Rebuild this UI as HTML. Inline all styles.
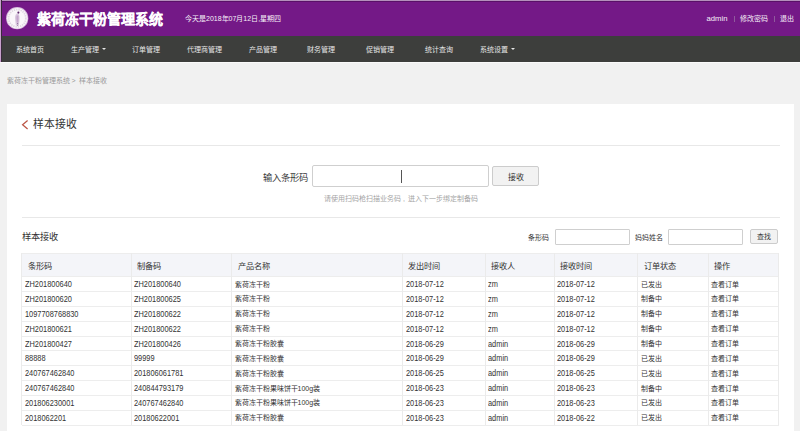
<!DOCTYPE html>
<html lang="zh-CN">
<head>
<meta charset="utf-8">
<style>
*{margin:0;padding:0;box-sizing:border-box;}
html,body{width:800px;height:431px;overflow:hidden;background:#f1f1f1;font-family:"Liberation Sans",sans-serif;color:#333;}
.abs{position:absolute;white-space:nowrap;}
#hdr{position:absolute;left:0;top:0;width:800px;height:36px;background:#741987;border-top:1px solid #b490bc;box-shadow:inset 0 1px 0 #5a1068;}
#lb{position:absolute;left:0;top:0;width:2px;height:62px;border-left:1px solid #c8a0cc;background:#3a2a3c;}
#navline{position:absolute;left:0;top:62px;width:800px;height:1px;background:#fafafa;}
#nav{position:absolute;left:0;top:36px;width:800px;height:26px;background:#3d3e3c;}
.nav{position:absolute;top:36.75px;height:26px;line-height:26px;font-size:7px;color:#e6e6e6;white-space:nowrap;}
.caret{display:inline-block;width:0;height:0;border-left:2px solid transparent;border-right:2px solid transparent;border-top:2.2px solid #e6e6e6;vertical-align:middle;margin-left:3px;margin-top:-1px;}
#panel{position:absolute;left:7px;top:104px;width:787px;height:327px;background:#fff;}
.hr{position:absolute;left:22px;width:758px;height:1px;background:#e8e8e8;}
.inp{position:absolute;border:1px solid #cfcfcf;border-radius:2px;background:#fff;}
.btn{position:absolute;border:1px solid #cccccc;border-radius:2px;background:#f2f2f2;font-size:8px;color:#333;text-align:center;}
.th{position:absolute;white-space:nowrap;font-size:8.2px;line-height:23.3px;padding-top:1.8px;color:#333;}
.td{position:absolute;white-space:nowrap;font-size:8.5px;line-height:14.85px;padding-top:0.6px;color:#333;transform:scaleX(0.87);transform-origin:0 50%;}
.td.cj,.td.pn{font-size:7px;padding-top:1px;transform:none;color:#333;}
</style>
</head>
<body>
<div id="hdr"></div>
<!-- logo -->
<svg class="abs" style="left:6px;top:6.5px" width="23" height="23" viewBox="0 0 23 23">
  <circle cx="11.2" cy="11.2" r="11.1" fill="#d8bede"/>
  <circle cx="11.2" cy="11.2" r="10.3" fill="#faf7fa"/>
  <circle cx="11.2" cy="11.2" r="8.6" fill="none" stroke="#e0d8e2" stroke-width="1.8" stroke-dasharray="1.4 0.9"/>
  <path d="M11.8 6.3 C10 6.8,8.9 8.6,9 10.8 C9.1 13,9.6 15.2,9.9 18.6 L12.9 18.6 C13.1 16,13.6 13.2,13.5 11 C13.5 9,13.2 7.3,11.8 6.3 Z" fill="#d9c8de"/>
  <path d="M10.6 8.5 C10.2 10.5,10.5 13,10.9 15.5 L12.2 15.5 C12.5 13,12.6 10.5,12.3 8.5 Z" fill="#c4a6cc"/>
  <circle cx="12.4" cy="5.6" r="1.05" fill="#5a2468"/>
  <circle cx="11.6" cy="16.6" r="0.6" fill="#8a6a96"/>
  <circle cx="11.6" cy="18.2" r="0.5" fill="#8a6a96"/>
</svg>
<div class="abs" style="left:37px;top:11px;font-size:14px;line-height:16px;font-weight:bold;color:#fff;-webkit-text-stroke:0.25px #fff;">紫荷冻干粉管理系统</div>
<div class="abs" style="left:185px;top:13.5px;font-size:7px;line-height:10px;color:#f6f0f8;">今天是2018年07月12日,星期四</div>
<div class="abs" style="left:706.5px;top:14px;font-size:7.7px;line-height:10px;color:#f6f0f8;">admin</div>
<div class="abs" style="left:733.5px;top:15.5px;width:1px;height:6px;background:#8f5a9c;"></div>
<div class="abs" style="left:740px;top:13.75px;font-size:7px;line-height:10px;color:#f6f0f8;">修改密码</div>
<div class="abs" style="left:774px;top:15.5px;width:1px;height:6px;background:#8f5a9c;"></div>
<div class="abs" style="left:780px;top:13.75px;font-size:7px;line-height:10px;color:#f6f0f8;">退出</div>

<div id="nav"></div>
<div id="lb"></div>
<div id="navline"></div>
<div class="nav" style="left:15.5px">系统首页</div>
<div class="nav" style="left:71px">生产管理<span class="caret"></span></div>
<div class="nav" style="left:132px">订单管理</div>
<div class="nav" style="left:187px">代理商管理</div>
<div class="nav" style="left:249px">产品管理</div>
<div class="nav" style="left:307px">财务管理</div>
<div class="nav" style="left:366px">促销管理</div>
<div class="nav" style="left:424.5px">统计查询</div>
<div class="nav" style="left:480px">系统设置<span class="caret"></span></div>

<div class="abs" style="left:7px;top:75.5px;font-size:7px;line-height:10px;color:#9a9a9a;">紫荷冻干粉管理系统<span style="margin:0 0 0 1.5px">&gt;</span><span style="margin-left:3px">样本接收</span></div>

<div id="panel"></div>
<svg class="abs" style="left:21px;top:119px" width="8" height="12" viewBox="0 0 8 12"><path d="M6.6 1.6 L1.6 5.8 L6.6 10" fill="none" stroke="#bb5444" stroke-width="1.25"/></svg>
<div class="abs" style="left:33px;top:117px;font-size:10.8px;line-height:14px;color:#333;">样本接收</div>
<div class="hr" style="top:145px"></div>

<div class="abs" style="left:262.5px;top:171.6px;font-size:9.3px;line-height:12px;color:#3a3a3a;">输入条形码</div>
<div class="inp" style="left:312px;top:165px;width:177px;height:21.5px;"></div>
<div class="abs" style="left:400.5px;top:169.5px;width:1px;height:13px;background:#555;"></div>
<div class="btn" style="left:492px;top:166px;width:47px;height:20px;line-height:21px;">接收</div>
<div class="abs" style="left:323.5px;top:194px;font-size:7px;line-height:10px;color:#a5a5a5;">请使用扫码枪扫描业务码<span style="display:inline-block;width:7px;text-align:center">,</span>进入下一步绑定制备码</div>
<div class="hr" style="top:217px"></div>

<div class="abs" style="left:21.5px;top:231px;font-size:9.25px;line-height:12px;color:#333;">样本接收</div>
<div class="abs" style="left:528px;top:232.7px;font-size:7px;line-height:10px;color:#333;">条形码</div>
<div class="inp" style="left:555px;top:229px;width:75px;height:16px;border-radius:1px;"></div>
<div class="abs" style="left:635px;top:232.7px;font-size:7px;line-height:10px;color:#333;">妈妈姓名</div>
<div class="inp" style="left:668px;top:229px;width:75px;height:16px;border-radius:1px;"></div>
<div class="btn" style="left:750px;top:229.3px;width:28px;height:14.3px;line-height:14px;font-size:7px;">查找</div>

<!--TBL-->
<div class="abs" style="left:21.7px;top:253.3px;width:757.0px;height:23.30000000000001px;background:#f4f5f9;"></div>
<div class="abs" style="left:21.7px;top:252.80px;width:757.50px;height:1px;background:#ededed;"></div>
<div class="abs" style="left:21.7px;top:276.10px;width:757.50px;height:1px;background:#ededed;"></div>
<div class="abs" style="left:21.7px;top:290.95px;width:757.50px;height:1px;background:#ededed;"></div>
<div class="abs" style="left:21.7px;top:305.80px;width:757.50px;height:1px;background:#ededed;"></div>
<div class="abs" style="left:21.7px;top:320.65px;width:757.50px;height:1px;background:#ededed;"></div>
<div class="abs" style="left:21.7px;top:335.50px;width:757.50px;height:1px;background:#ededed;"></div>
<div class="abs" style="left:21.7px;top:350.35px;width:757.50px;height:1px;background:#ededed;"></div>
<div class="abs" style="left:21.7px;top:365.20px;width:757.50px;height:1px;background:#ededed;"></div>
<div class="abs" style="left:21.7px;top:380.05px;width:757.50px;height:1px;background:#ededed;"></div>
<div class="abs" style="left:21.7px;top:394.90px;width:757.50px;height:1px;background:#ededed;"></div>
<div class="abs" style="left:21.7px;top:409.75px;width:757.50px;height:1px;background:#ededed;"></div>
<div class="abs" style="left:21.7px;top:424.60px;width:757.50px;height:1px;background:#ededed;"></div>
<div class="abs" style="left:21.20px;top:253.3px;width:1px;height:171.80px;background:#ebebeb;"></div>
<div class="abs" style="left:130.70px;top:253.3px;width:1px;height:171.80px;background:#ebebeb;"></div>
<div class="abs" style="left:231.20px;top:253.3px;width:1px;height:171.80px;background:#ebebeb;"></div>
<div class="abs" style="left:401.80px;top:253.3px;width:1px;height:171.80px;background:#ebebeb;"></div>
<div class="abs" style="left:484.70px;top:253.3px;width:1px;height:171.80px;background:#ebebeb;"></div>
<div class="abs" style="left:553.70px;top:253.3px;width:1px;height:171.80px;background:#ebebeb;"></div>
<div class="abs" style="left:637.00px;top:253.3px;width:1px;height:171.80px;background:#ebebeb;"></div>
<div class="abs" style="left:708.00px;top:253.3px;width:1px;height:171.80px;background:#ebebeb;"></div>
<div class="abs" style="left:778.20px;top:253.3px;width:1px;height:171.80px;background:#ebebeb;"></div>
<div class="th" style="left:28.20px;top:253.30px;">条形码</div>
<div class="th" style="left:136.80px;top:253.30px;">制备码</div>
<div class="th" style="left:237.70px;top:253.30px;">产品名称</div>
<div class="th" style="left:408.30px;top:253.30px;">发出时间</div>
<div class="th" style="left:491.20px;top:253.30px;">接收人</div>
<div class="th" style="left:560.20px;top:253.30px;">接收时间</div>
<div class="th" style="left:643.50px;top:253.30px;">订单状态</div>
<div class="th" style="left:714.20px;top:253.30px;">操作</div>
<div class="td" style="left:24.80px;top:276.60px;">ZH201800640</div>
<div class="td" style="left:133.80px;top:276.60px;">ZH201800640</div>
<div class="td pn" style="left:234.50px;top:276.60px;">紫荷冻干粉</div>
<div class="td" style="left:405.70px;top:276.60px;">2018-07-12</div>
<div class="td" style="left:488.20px;top:276.60px;">zm</div>
<div class="td" style="left:557.00px;top:276.60px;">2018-07-12</div>
<div class="td cj" style="left:640.50px;top:276.60px;">已发出</div>
<div class="td cj" style="left:710.70px;top:276.60px;">查看订单</div>
<div class="td" style="left:24.80px;top:291.45px;">ZH201800620</div>
<div class="td" style="left:133.80px;top:291.45px;">ZH201800625</div>
<div class="td pn" style="left:234.50px;top:291.45px;">紫荷冻干粉</div>
<div class="td" style="left:405.70px;top:291.45px;">2018-07-12</div>
<div class="td" style="left:488.20px;top:291.45px;">zm</div>
<div class="td" style="left:557.00px;top:291.45px;">2018-07-12</div>
<div class="td cj" style="left:640.50px;top:291.45px;">制备中</div>
<div class="td cj" style="left:710.70px;top:291.45px;">查看订单</div>
<div class="td" style="left:24.80px;top:306.30px;">1097708768830</div>
<div class="td" style="left:133.80px;top:306.30px;">ZH201800622</div>
<div class="td pn" style="left:234.50px;top:306.30px;">紫荷冻干粉</div>
<div class="td" style="left:405.70px;top:306.30px;">2018-07-12</div>
<div class="td" style="left:488.20px;top:306.30px;">zm</div>
<div class="td" style="left:557.00px;top:306.30px;">2018-07-12</div>
<div class="td cj" style="left:640.50px;top:306.30px;">制备中</div>
<div class="td cj" style="left:710.70px;top:306.30px;">查看订单</div>
<div class="td" style="left:24.80px;top:321.15px;">ZH201800621</div>
<div class="td" style="left:133.80px;top:321.15px;">ZH201800622</div>
<div class="td pn" style="left:234.50px;top:321.15px;">紫荷冻干粉</div>
<div class="td" style="left:405.70px;top:321.15px;">2018-07-12</div>
<div class="td" style="left:488.20px;top:321.15px;">zm</div>
<div class="td" style="left:557.00px;top:321.15px;">2018-07-12</div>
<div class="td cj" style="left:640.50px;top:321.15px;">制备中</div>
<div class="td cj" style="left:710.70px;top:321.15px;">查看订单</div>
<div class="td" style="left:24.80px;top:336.00px;">ZH201800427</div>
<div class="td" style="left:133.80px;top:336.00px;">ZH201800426</div>
<div class="td pn" style="left:234.50px;top:336.00px;">紫荷冻干粉胶囊</div>
<div class="td" style="left:405.70px;top:336.00px;">2018-06-29</div>
<div class="td" style="left:488.20px;top:336.00px;">admin</div>
<div class="td" style="left:557.00px;top:336.00px;">2018-06-29</div>
<div class="td cj" style="left:640.50px;top:336.00px;">制备中</div>
<div class="td cj" style="left:710.70px;top:336.00px;">查看订单</div>
<div class="td" style="left:24.80px;top:350.85px;">88888</div>
<div class="td" style="left:133.80px;top:350.85px;">99999</div>
<div class="td pn" style="left:234.50px;top:350.85px;">紫荷冻干粉胶囊</div>
<div class="td" style="left:405.70px;top:350.85px;">2018-06-29</div>
<div class="td" style="left:488.20px;top:350.85px;">admin</div>
<div class="td" style="left:557.00px;top:350.85px;">2018-06-29</div>
<div class="td cj" style="left:640.50px;top:350.85px;">已发出</div>
<div class="td cj" style="left:710.70px;top:350.85px;">查看订单</div>
<div class="td" style="left:24.80px;top:365.70px;">240767462840</div>
<div class="td" style="left:133.80px;top:365.70px;">201806061781</div>
<div class="td pn" style="left:234.50px;top:365.70px;">紫荷冻干粉胶囊</div>
<div class="td" style="left:405.70px;top:365.70px;">2018-06-25</div>
<div class="td" style="left:488.20px;top:365.70px;">admin</div>
<div class="td" style="left:557.00px;top:365.70px;">2018-06-25</div>
<div class="td cj" style="left:640.50px;top:365.70px;">已发出</div>
<div class="td cj" style="left:710.70px;top:365.70px;">查看订单</div>
<div class="td" style="left:24.80px;top:380.55px;">240767462840</div>
<div class="td" style="left:133.80px;top:380.55px;">240844793179</div>
<div class="td pn" style="left:234.50px;top:380.55px;">紫荷冻干粉果味饼干100g装</div>
<div class="td" style="left:405.70px;top:380.55px;">2018-06-23</div>
<div class="td" style="left:488.20px;top:380.55px;">admin</div>
<div class="td" style="left:557.00px;top:380.55px;">2018-06-23</div>
<div class="td cj" style="left:640.50px;top:380.55px;">制备中</div>
<div class="td cj" style="left:710.70px;top:380.55px;">查看订单</div>
<div class="td" style="left:24.80px;top:395.40px;">201806230001</div>
<div class="td" style="left:133.80px;top:395.40px;">240767462840</div>
<div class="td pn" style="left:234.50px;top:395.40px;">紫荷冻干粉果味饼干100g装</div>
<div class="td" style="left:405.70px;top:395.40px;">2018-06-23</div>
<div class="td" style="left:488.20px;top:395.40px;">admin</div>
<div class="td" style="left:557.00px;top:395.40px;">2018-06-23</div>
<div class="td cj" style="left:640.50px;top:395.40px;">已发出</div>
<div class="td cj" style="left:710.70px;top:395.40px;">查看订单</div>
<div class="td" style="left:24.80px;top:410.25px;">2018062201</div>
<div class="td" style="left:133.80px;top:410.25px;">20180622001</div>
<div class="td pn" style="left:234.50px;top:410.25px;">紫荷冻干粉胶囊</div>
<div class="td" style="left:405.70px;top:410.25px;">2018-06-23</div>
<div class="td" style="left:488.20px;top:410.25px;">admin</div>
<div class="td" style="left:557.00px;top:410.25px;">2018-06-22</div>
<div class="td cj" style="left:640.50px;top:410.25px;">已发出</div>
<div class="td cj" style="left:710.70px;top:410.25px;">查看订单</div>
<!--/TBL-->
</body>
</html>
